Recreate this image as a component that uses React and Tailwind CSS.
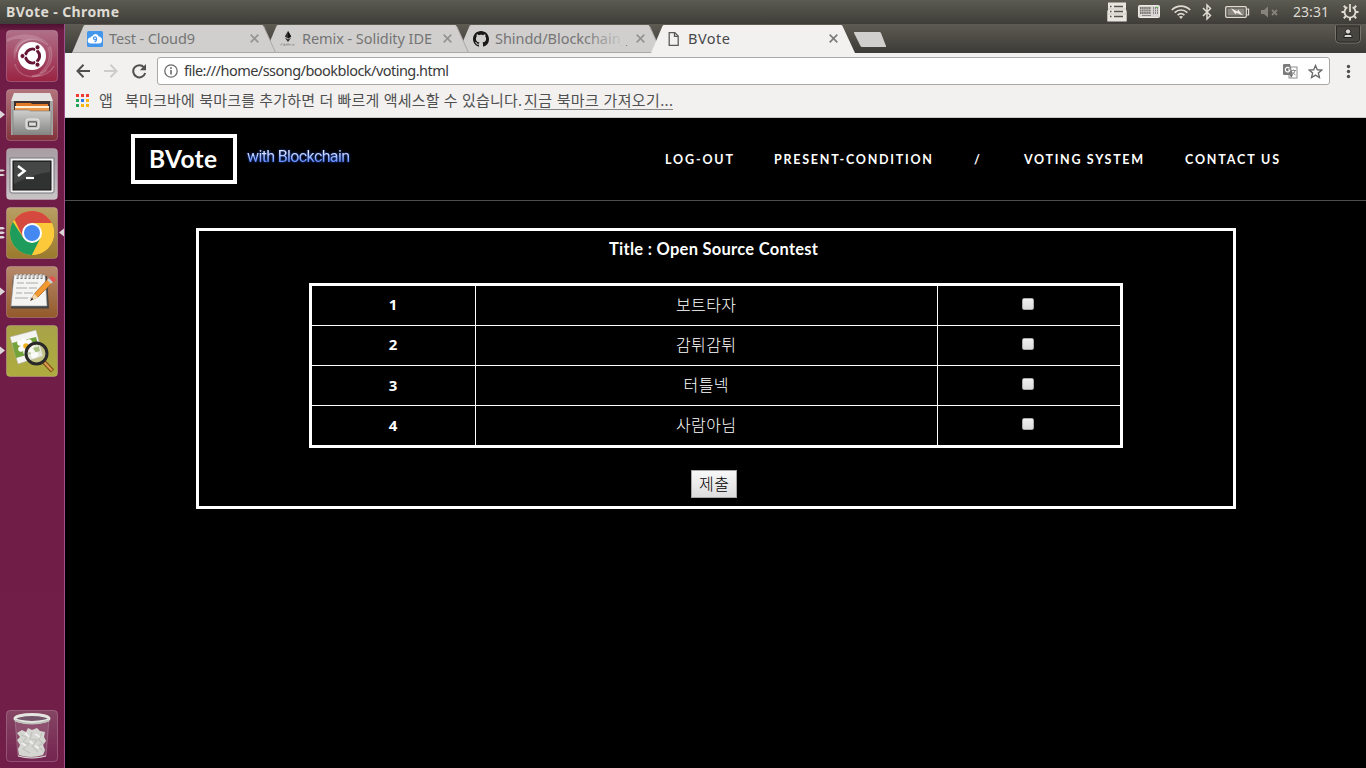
import { useLayoutEffect, useRef, useState } from "react";

/* Spreads its text evenly over the width of its own box. */
function Fit({ className = "", children }) {
  const box = useRef(null);
  const inner = useRef(null);
  const [spacing, setSpacing] = useState(0);
  useLayoutEffect(() => {
    const count = Array.from(children).length;
    if (count < 2) return;
    const extra = box.current.clientWidth - inner.current.getBoundingClientRect().width;
    setSpacing(extra / (count - 1));
  }, [children]);
  return (
    <span ref={box} className={`block shrink-0 whitespace-nowrap ${className}`}>
      <span ref={inner} className="inline-block" style={{ letterSpacing: `${spacing}px` }}>
        {children}
      </span>
    </span>
  );
}

const ui = "font-['Noto_Sans','Noto_Sans_CJK_KR',sans-serif]";

function StatusIcons() {
  return (
    <div className="flex h-6 items-center">
      <svg width="20" height="24" viewBox="0 0 20 24">
        <path d="M1 2.500h18v7l.7 2v10H.3v-10l.7-2z" fill="#e8e6df" />
        <path d="M3 6.500h1.500M7 6.500h9M3 11.500h1.500M7 11.500h9M3 16.500h1.500M7 16.500h9" stroke="#55534d" strokeWidth="1.300" />
        <path d="M1 9h18M0 14h20" stroke="#c4c2bb" strokeWidth=".7" />
      </svg>
      <svg className="ml-[11px]" width="22" height="24" viewBox="0 0 22 24">
        <rect x=".5" y="5.500" width="21" height="12" rx="1" fill="#d8d5d2" stroke="#eeeae4" />
        <path d="M2 8h11M2 10.500h11M2 13h11" stroke="#77756f" strokeWidth="1.800" strokeDasharray="1.500 .6" />
        <path d="M15 8h5M15 10.500h5M15 13h5" stroke="#888" strokeWidth="1.800" strokeDasharray="1 1" />
        <path d="M4 15.500h9" stroke="#888" />
        <path d="M18 7.500h2" stroke="#54b848" />
      </svg>
      <svg className="ml-[11px]" width="20" height="24" viewBox="0 0 20 24" fill="none" stroke="#dfdbd2" strokeWidth="1.700">
        <path d="M.8 10C6 4.800 14 4.800 19.200 10" />
        <path d="M3.700 12.600c3.600-3.500 9-3.500 12.600 0" />
        <path d="M6.600 15.200c2-1.900 4.800-1.900 6.800 0" />
        <path d="M8 16.800q2-1.400 4 0L10 19z" fill="#dfdbd2" stroke="none" />
      </svg>
      <svg className="ml-[11px]" width="10" height="24" viewBox="0 0 10 24" fill="none" stroke="#dfdbd2" strokeWidth="1.500">
        <path d="M1 8l7.500 7.500L5 19V5l3.500 3.500L1 16" />
      </svg>
      <svg className="ml-[13px]" width="25" height="24" viewBox="0 0 25 24">
        <rect x=".7" y="6.700" width="20.600" height="10.600" rx="1" fill="none" stroke="#dfdbd2" strokeWidth="1.300" />
        <rect x="2.500" y="8.500" width="17" height="7" fill="#8a8881" />
        <path d="M22.200 9.200h1.400v5.600h-1.400" fill="none" stroke="#dfdbd2" strokeWidth="1.200" />
        <path d="M6 8.200l6.500 3.200.6-1.800 4.800 6-6.600-2.900-.6 1.700z" fill="#f0ece4" />
      </svg>
      <svg className="ml-[11px]" width="17" height="24" viewBox="0 0 17 24">
        <path d="M0 10h3l4-3.500v11L3 14H0z" fill="#85837b" />
        <path d="M11 10l5 5m0-5l-5 5" stroke="#85837b" strokeWidth="1.800" />
      </svg>
      <Fit className={`ml-[15px] w-[36px] text-[14px] leading-6 text-[#dfdbd2] ${ui}`}>23:31</Fit>
      <svg className="ml-[12px] mr-[7px]" width="18" height="24" viewBox="-9 -12 18 24" fill="none" stroke="#dfdbd2">
        <path d="M-2.600-4.800A5.500 5.500 0 1 0 2.600-4.800" strokeWidth="1.800" />
        <path d="M0-8v8" strokeWidth="1.800" />
        <path d="M5.500 0h3M-5.500 0h-3M0 5.500v3M4 4l2.200 2.200M-4 4l-2.200 2.200M4-4l2.200-2.200M-4-4l-2.200-2.200" strokeWidth="2" />
      </svg>
    </div>
  );
}

function Tile({ from, to, children }) {
  const id = `tile${from.slice(1)}`;
  return (
    <svg className="block" width="52" height="52" viewBox="0 0 52 52">
      <defs>
        <linearGradient id={id} x2="0" y2="1">
          <stop stopColor={from} />
          <stop offset="1" stopColor={to} />
        </linearGradient>
      </defs>
      <rect x=".5" y=".5" width="51" height="51" rx="3.500" fill={`url(#${id})`} stroke="#fff" strokeOpacity=".22" />
      {children}
    </svg>
  );
}

function DashTile() {
  return (
    <Tile from="#b07088" to="#9a2343">
      <path d="M1 9C14 2 34 2 44 16q-8-9-20-6Q10 14 9 30 4 18 16 9 8 8 1 12z" fill="#fff" fillOpacity=".16" />
      <path d="M44 16c5 14-2 28-18 30 10 1 18-3 22-10" fill="none" stroke="#fff" strokeOpacity=".22" strokeWidth="1.500" />
      <path d="M10 22C12 10 28 4 42 15M9 34c2 12 20 18 32 6M42 17c4 10 0 20-8 26" fill="none" stroke="#fff" strokeOpacity=".2" strokeWidth="1.500" />
      <circle cx="26" cy="26" r="14" fill="#fff" />
      <g transform="translate(26.500 26)">
        <circle r="7" fill="none" stroke="#651433" strokeWidth="3.200" />
        <path d="M0 0L-12 0M0 0L6 10.400M0 0L6-10.400" stroke="#fff" strokeWidth="1.400" />
        <circle r="5.400" fill="#fff" />
        <g fill="#651433" stroke="#fff" strokeWidth=".9">
          <circle cx="-10" r="2.500" />
          <circle cx="5" cy="8.700" r="2.500" />
          <circle cx="5" cy="-8.700" r="2.500" />
        </g>
      </g>
    </Tile>
  );
}

function FilesTile() {
  return (
    <Tile from="#b3747c" to="#82333a">
      <defs>
        <linearGradient id="cab" x2="0" y2="1">
          <stop stopColor="#cfcfcd" />
          <stop offset="1" stopColor="#868684" />
        </linearGradient>
      </defs>
      <path d="M8 4h36l3 9v33H5V13z" fill="#a5a5a3" />
      <path d="M8 4h36l3 8H5z" fill="#e4e4e2" />
      <path d="M8 12h36v10H8z" fill="#3c3030" />
      <path d="M10 14h15l1 1h16v7H10z" fill="#e07a28" />
      <path d="M9 17h34v2H9z" fill="#fff1d8" />
      <path d="M9 19h34v3H9z" fill="#f0994b" />
      <path d="M7 21h16l1.500 1H45v23.500H7z" fill="url(#cab)" stroke="#777" strokeWidth=".6" />
      <rect x="20" y="30" width="13" height="10" rx="2" fill="#c9c9c7" stroke="#eee" />
      <rect x="22.500" y="32.800" width="8" height="4.500" rx=".8" fill="#ddd" stroke="#555" strokeWidth="1.200" />
    </Tile>
  );
}

function TerminalTile() {
  return (
    <Tile from="#a79da2" to="#c8c4c6">
      <path d="M4 10h44v33q0 2-2 2H6q-2 0-2-2z" fill="#efefef" stroke="#77747a" />
      <rect x="7" y="13" width="38" height="29" fill="#303231" stroke="#141414" />
      <path d="M8 14h36v10Q26 26 8 36z" fill="#fff" fillOpacity=".1" />
      <path d="M12 18l6.500 5-6.500 5" fill="none" stroke="#fff" strokeWidth="2.500" />
      <path d="M20 30h8" stroke="#fff" strokeWidth="2.200" />
    </Tile>
  );
}

function ChromeTile() {
  return (
    <Tile from="#b99f65" to="#9a7a2b">
      <g transform="translate(26 26)">
        <circle r="22" fill="#fcc934" />
        <path d="M-19.050-11A22 22 0 0 0 0 22L8.600 5-8.600 5z" fill="#1e9c5b" />
        <path d="M8.600 5L0 22A22 22 0 0 0 19.700-10H0z" fill="#fcc93a" />
        <path d="M-17.500-13.300A22 22 0 0 1 19.700-10H0L-8.600 5z" fill="#d5493f" />
        <circle r="10" fill="#fff" />
        <circle r="8" fill="#4688f1" />
      </g>
    </Tile>
  );
}

function EditorTile() {
  return (
    <Tile from="#b78a6c" to="#935a2a">
      <path d="M7 10h34l2 32.500H5z" fill="#444" />
      <path d="M8 9h31l2 31H5z" fill="#f4f4f2" stroke="#999" strokeWidth=".6" />
      <path d="M11 17h7m2 0h12M10 22h11m2 0h8M10 27h6m2 0h9M9 32h13m2 0h3" stroke="#aaa" strokeWidth="1" />
      <path d="M11.500 8v5m4-5v5m4-5v5m4-5v5m4-5v5m4-5v5m4-5v5" stroke="#777" strokeWidth="2" />
      <path d="M11 8v4m4-4v4m4-4v4m4-4v4m4-4v4m4-4v4m4-4v4" stroke="#fff" strokeWidth="1" />
      <path d="M25 34l4-7L42 13l4 4-14 14z" fill="#f29a31" stroke="#a35b18" strokeWidth=".7" />
      <path d="M24 35l4.500-7 3.500 3.500z" fill="#f3d8ab" />
      <path d="M24 35l2-3.200 1.400 1.400z" fill="#222" />
      <path d="M41 14l4 4 2-2-4-4z" fill="#ccc" />
      <path d="M43 12q2-3 5-1t.500 5L47 16z" fill="#e05550" />
    </Tile>
  );
}

function ViewerTile() {
  return (
    <Tile from="#a8a348" to="#aeac3f">
      <path d="M4 12l26-7 7 26-25 8z" fill="#f4f4f0" stroke="#aaa" strokeWidth=".5" />
      <path d="M6 18l24-6 4 14-24 7z" fill="#74a23b" />
      <g fill="#fff">
        <circle cx="14" cy="18" r="2.800" />
        <circle cx="18" cy="16" r="2.800" />
        <circle cx="23" cy="17" r="2.800" />
        <circle cx="26" cy="20" r="2.800" />
        <circle cx="25" cy="25" r="2.800" />
        <circle cx="20" cy="27" r="2.800" />
        <circle cx="15" cy="24" r="2.800" />
        <circle cx="20" cy="21" r="5.500" />
      </g>
      <circle cx="20" cy="21" r="2.800" fill="#efb21e" />
      <path d="M38 37l8.500 9" stroke="#7d5018" strokeWidth="4.500" />
      <path d="M38 37l8 8.500" stroke="#d89b4e" strokeWidth="2.200" />
      <circle cx="30.500" cy="28.500" r="10.500" fill="#d8dcc4" fillOpacity=".5" stroke="#292929" strokeWidth="3" />
      <path d="M24.500 25q3-3 5 2 3 0 3 3-2 4-7 3z" fill="#fff" fillOpacity=".8" />
      <path d="M24 27a7 7 0 0 1 8-6" fill="none" stroke="#fff" strokeOpacity=".7" strokeWidth="2" />
    </Tile>
  );
}

function TrashTile() {
  return (
    <Tile from="#864563" to="#742450">
      <path d="M9 9h34l-3 37q-14 4-28 0z" fill="#bda3b2" fillOpacity=".22" stroke="#b99fb0" strokeWidth=".7" strokeOpacity=".6" />
      <path d="M13 45l-1-6 2-4-3-5 3-3-3-4 5-3 4 2 2-4 4 2 5-2 3 3 5 1-1 5 2 4-3 4 2 5-2 5q-12 4-24 0z" fill="#d5d6d1" />
      <path d="M15 25l6 2-4 5 6 2-6 5 7 4M26 22l-2 7 7 1-5 6 6 6M36 23l-3 7 4 3-5 3 5 5" fill="none" stroke="#c0c2bc" strokeWidth="1.200" />
      <path d="M19 23l4 4M29 24l5 3M16 33l4 3M29 36l4 2M24 31l3 3" stroke="#eee" strokeWidth="2" />
      <path d="M12 46q14 4 28 0" fill="none" stroke="#d9dad5" />
      <ellipse cx="26" cy="8.500" rx="17" ry="4" fill="#74566a" stroke="#e4e5e0" strokeWidth="3" />
      <path d="M9 9.500q17 7 34 0v2q-17 6-34 0z" fill="#bfc1bb" />
    </Tile>
  );
}

function LauncherItem({ windows = 0, active, children }) {
  return (
    <div className="flex h-[52px] w-[64px] items-center">
      <svg width="6" height="52" viewBox="0 0 6 52" fill="#dcd6d8">
        {windows === 1 && <path d="M0 21.500l5 4-5 4z" />}
        {windows === 2 && <path d="M0 21.500h3l2 1-2 1H0zM0 26h3l2 1-2 1H0z" />}
        {windows === 3 && <path d="M0 20h3l2 1.200-2 1.200H0zM0 24.500h3l2 1.200-2 1.200H0zM0 29h3l2 1.200-2 1.200H0z" />}
      </svg>
      {children}
      <svg width="6" height="52" viewBox="0 0 6 52" fill="#dcd6d8">
        {active && <path d="M6 21.500l-5 4 5 4z" />}
      </svg>
    </div>
  );
}

function Launcher() {
  return (
    <aside className="flex w-[65px] shrink-0 flex-col justify-between border-r border-[#a0508c] bg-linear-to-b from-[#4d1030] from-0% via-[#6f1d46] via-[1%] to-[#711f49] pb-[6px] pt-[6px]">
      <div className="flex flex-col gap-[7px]">
        <LauncherItem><DashTile /></LauncherItem>
        <LauncherItem windows={1}><FilesTile /></LauncherItem>
        <LauncherItem windows={2}><TerminalTile /></LauncherItem>
        <LauncherItem windows={3} active><ChromeTile /></LauncherItem>
        <LauncherItem windows={1}><EditorTile /></LauncherItem>
        <LauncherItem windows={1}><ViewerTile /></LauncherItem>
      </div>
      <LauncherItem><TrashTile /></LauncherItem>
    </aside>
  );
}

function Tab({ icon, title, active, fades, layer, width }) {
  return (
    <div className={`relative -mr-[12px] h-[29px] w-[205px] shrink-0 ${layer}`}>
      <svg className="absolute inset-0" width="205" height="29" viewBox="0 0 205 29">
        <path d="M0 29L11.500 2Q12 1 13 1h177q1 0 1.500 1L204 29z" fill={active ? "#f2f1f0" : "#d0cfce"} />
        {!active && <path d="M0 28.500h203.500L191.500 2" fill="none" stroke="#aaa9a7" />}
      </svg>
      <div className="relative flex h-[29px] items-center pl-[15px]">
        {icon}
        <div className="ml-[6px] w-[132px]">
          <Fit className={`text-[14.500px] leading-[26px] mb-[2px] ${width} ${ui} ${active ? "text-[#48484a]" : "text-[#757575]"}`}>{title}</Fit>
        </div>
        <svg className="ml-[9px]" width="9" height="9" viewBox="0 0 9 9" stroke={active ? "#7d7d7d" : "#949494"} strokeWidth="1.700">
          <path d="M.7.700l7.600 7.600m0-7.600L.7 8.300" />
        </svg>
        {fades && <div className="absolute left-[126px] top-1 h-5 w-[42px] bg-linear-to-r from-transparent to-[#d0cfce]" />}
      </div>
    </div>
  );
}

const cloud9 = (
  <svg className="shrink-0" width="16" height="16" viewBox="0 0 16 16">
    <rect width="16" height="16" rx="1.500" fill="#4297ed" />
    <path d="M4 12.500a3 3 0 0 1-.5-6Q4 5 5.500 5 6.500 3 8.500 3q2.500 0 3.300 2.500Q15 6 15 9q0 3.500-3 3.500z" fill="#fff" />
    <circle cx="8" cy="7.300" r="1.500" fill="none" stroke="#4297ed" strokeWidth="1.200" />
    <path d="M9.600 7.500q0 3-2.100 3.500" fill="none" stroke="#4297ed" strokeWidth="1.200" />
  </svg>
);

const remix = (
  <svg className="shrink-0" width="16" height="16" viewBox="0 0 16 16">
    <path d="M8 0l3.200 5.500L8 7.500 4.800 5.500z" fill="#333" />
    <path d="M8 0l3.200 5.500L8 7.500z" fill="#111" />
    <path d="M4.800 6.500L8 8.500l3.200-2L8 11z" fill="#222" />
    <path d="M1 14.500v-1.500h1.500m1 .7h2m-2-.7h1.500m-1.500 1.500h2m1 0v-1.500h2.800v1.500m-1.400-1.500v1.500m3-1.500v1.500m1.500-1.500l2 1.500m0-1.500l-2 1.500" fill="none" stroke="#8a8a8a" strokeWidth=".7" />
  </svg>
);

const github = (
  <svg className="shrink-0" width="16" height="16" viewBox="0 0 16 16" fill="#191717">
    <path d="M8 0C3.580 0 0 3.580 0 8c0 3.540 2.290 6.530 5.470 7.590.4.070.55-.17.55-.38 0-.19-.01-.82-.01-1.490-2.010.37-2.530-.49-2.690-.94-.09-.23-.48-.94-.82-1.130-.28-.15-.68-.52-.01-.53.63-.01 1.080.58 1.230.82.72 1.210 1.870.87 2.330.66.07-.52.28-.87.51-1.070-1.780-.2-3.640-.89-3.640-3.950 0-.87.31-1.590.82-2.150-.08-.2-.36-1.020.08-2.120 0 0 .67-.21 2.200.82.64-.18 1.320-.27 2-.27s1.360.09 2 .27c1.530-1.040 2.200-.82 2.200-.82.44 1.100.16 1.920.08 2.120.51.56.82 1.270.82 2.150 0 3.070-1.870 3.750-3.650 3.950.29.25.54.73.54 1.480 0 1.070-.01 1.930-.01 2.200 0 .21.15.46.55.38A8.010 8.010 0 0 0 16 8c0-4.420-3.580-8-8-8z" />
  </svg>
);

const page = (
  <svg className="shrink-0" width="16" height="16" viewBox="0 0 16 16" fill="none" stroke="#5a5a5a" strokeWidth="1.300">
    <path d="M3.200 1.600h5.600l3.400 3.500v9.200h-9z" />
    <path d="M8.500 1.700v3.700H12" />
  </svg>
);

function BrowserChrome() {
  return (
    <div className="shrink-0">
      <div className="flex h-[29px] items-start justify-between bg-linear-to-b from-[#5d5b52] to-[#3c3b37] pl-[7px]">
        <div className="flex">
          <Tab icon={cloud9} title="Test - Cloud9" width="w-[86px]" layer="z-30" />
          <Tab icon={remix} title="Remix - Solidity IDE" width="w-[130px]" layer="z-20" />
          <Tab icon={github} title="Shindd/Blockchain_" width="w-[132px]" layer="z-10" fades />
          <Tab icon={page} title="BVote" width="w-[42px]" layer="z-40" active />
          <svg className="ml-[10px] mt-[7px]" width="34" height="17" viewBox="0 0 34 17">
            <path d="M.5 1h25q1 0 1.500 1l5 13q.3 1-.7 1H8Q7 16 6.500 15L0 2Q-.3 1 .5 1z" fill="#d0cfce" />
          </svg>
        </div>
        <svg className="mr-[5px]" width="26" height="20" viewBox="0 0 26 20">
          <path d="M.5 2v13q0 4 4 4h17q4 0 4-4V2" fill="none" stroke="#77756c" />
          <path d="M1.500 2v13q0 3 3 3h17q3 0 3-3V2z" fill="#46453f" stroke="#2c2b28" />
          <path d="M9 13.500V12q0-1.500 2-1.500h4q2 0 2 1.500v1.500z" fill="#d8d6d2" stroke="#22211f" strokeWidth="1" />
          <circle cx="13" cy="7.500" r="2.700" fill="#d8d6d2" stroke="#22211f" strokeWidth="1" />
        </svg>
      </div>
      <div className="flex h-[35px] items-center bg-[#f2f1f0] pl-[11px] pr-[15px] pt-px">
        <svg width="71" height="16" viewBox="0 0 71 16" fill="none" strokeWidth="2">
          <path d="M14 8H1.500m6-6.200L1.500 8l6 6.200" stroke="#505050" />
          <path d="M28 8h12.500m-6-6.200L40.500 8l-6 6.200" stroke="#cdcccb" />
          <path d="M68 4.300A6.100 6.100 0 1 0 69.200 10" stroke="#505050" />
          <path d="M70 1v6.200h-6.200z" fill="#505050" />
        </svg>
        <div className="ml-[10px] flex h-[28px] flex-1 items-center rounded-[3px] border border-[#a9a8a7] bg-white pl-[6px] pr-[6px]">
          <svg width="14" height="14" viewBox="0 0 14 14" fill="none" stroke="#6b6b6b" strokeWidth="1.300">
            <circle cx="7" cy="7" r="6.200" />
            <path d="M7 6v4.500M7 3.300v1.600" strokeWidth="1.600" />
          </svg>
          <Fit className={`ml-[6px] mb-[2px] w-[265px] text-[14.500px] leading-[24px] text-[#3a3a3a] ${ui}`}>file:///home/ssong/bookblock/voting.html</Fit>
          <svg className="ml-auto" width="15" height="15" viewBox="0 0 15 15">
            <rect x="6" y="3" width="8" height="11" fill="#fff" stroke="#8d8d8d" />
            <path d="M1 0h6l3 11H1q-1 0-1-1V1q0-1 1-1z" fill="#7c7c7c" />
            <path d="M6.500 4.300A2.300 2.300 0 1 0 6.900 6H5" fill="none" stroke="#fff" strokeWidth="1.200" />
            <path d="M8.500 6.500H13M10.800 5.500v1M12 6.800Q11.500 9 9 11m.800-3Q10.500 10 12.500 11" fill="none" stroke="#8d8d8d" />
            <path d="M7 11h2.800L8 14z" fill="#666" />
          </svg>
          <svg className="ml-[10px]" width="15" height="15" viewBox="0 0 24 24" fill="none" stroke="#6b6b6b" strokeWidth="2.200">
            <path d="M12 2.500l2.900 6.700 7.100.6-5.400 4.700 1.700 7.100-6.300-3.800-6.300 3.800 1.700-7.100L2 9.800l7.100-.6z" />
          </svg>
        </div>
        <svg className="ml-[15px]" width="6" height="16" viewBox="0 0 6 16" fill="#505050">
          <circle cx="3.500" cy="3.500" r="1.700" />
          <circle cx="3.500" cy="8.500" r="1.700" />
          <circle cx="3.500" cy="13.500" r="1.700" />
        </svg>
      </div>
      <div className={`flex h-[30px] items-center border-b border-[#c9c8c7] bg-[#f2f1f0] pb-[4px] pl-[11px] text-[15px] leading-[25px] text-[#505050] ${ui}`}>
        <svg width="13" height="13" viewBox="0 0 13 13">
          <path d="M0 0h3v3H0zM5 0h3v3H5zM10 0h3v3h-3z" fill="#f23b30" />
          <path d="M0 5h3v3H0zM0 10h3v3H0z" fill="#26a15b" />
          <path d="M5 5h3v3H5z" fill="#2d7ff0" />
          <path d="M10 5h3v3h-3zM5 10h3v3H5zM10 10h3v3h-3z" fill="#f5b50a" />
        </svg>
        <Fit className="ml-[10px] w-[14px]">앱</Fit>
        <Fit className="ml-[12px] w-[397px]">북마크바에 북마크를 추가하면 더 빠르게 액세스할 수 있습니다.</Fit>
        <Fit className="ml-[2px] mb-px h-[20px] w-[149px] border-b border-[#858585] leading-[21px]">지금 북마크 가져오기...</Fit>
      </div>
    </div>
  );
}

const heading = "font-['Lato','Noto_Sans_CJK_KR',sans-serif]";

const candidates = [
  { id: 1, name: "보트타자", width: "w-[60px]" },
  { id: 2, name: "감튀감튀", width: "w-[60px]" },
  { id: 3, name: "터틀넥", width: "w-[45px]" },
  { id: 4, name: "사람아님", width: "w-[60px]" },
];

function VotingPage() {
  return (
    <main className={`flex-1 bg-black text-white ${heading}`}>
      <header className="flex h-[83px] items-start border-b border-[#4d4d4d] pl-[66px] pt-[16px]">
        <div className="flex h-[50px] w-[106px] border-4 border-white pl-[14px] text-[24.500px] font-bold leading-[41px]">
          <Fit className="w-[68px]">BVote</Fit>
        </div>
        <Fit className="ml-[10px] mt-[12px] w-[103px] bg-linear-to-b from-[#e0e8ff] from-30% to-[#4a78ff] to-80% bg-clip-text font-['Roboto',sans-serif] text-[16px] leading-[22px] text-transparent [filter:drop-shadow(0_0_1px_#2450e0)]">
          with Blockchain
        </Fit>
        <nav className="ml-[315px] flex pt-[15px] text-[12.500px] font-bold leading-[21px]">
          <Fit className="w-[68px]">LOG-OUT</Fit>
          <Fit className="ml-[41px] w-[158px]">PRESENT-CONDITION</Fit>
          <span className="ml-[42px] w-[7px]">/</span>
          <Fit className="ml-[43px] w-[119px]">VOTING SYSTEM</Fit>
          <Fit className="ml-[42px] w-[94px]">CONTACT US</Fit>
        </nav>
      </header>
      <section className="ml-[131px] mt-[27px] flex h-[281px] w-[1040px] flex-col items-center border-[3px] border-white">
        <Fit className="-ml-[5px] mt-[6px] h-[24px] w-[209px] text-[16.500px] font-bold leading-[25px]">Title : Open Source Contest</Fit>
        <div className="mt-[22px] h-[165px] w-[814px] divide-y divide-white border-[3px] border-white text-[16px]">
          {candidates.map((c) => (
            <div key={c.id} className="flex h-[40px] divide-x divide-white last:h-[39px]">
              <div className={`w-[164px] pr-px text-center font-['Open_Sans',sans-serif] text-[15px] font-bold leading-[26px] ${c.id > 2 ? "pt-[6px]" : "pt-[5px]"}`}>{c.id}</div>
              <div className="flex w-[462px] justify-center pr-px pt-[5px] font-['Noto_Sans_CJK_KR',sans-serif] font-light leading-[26px]">
                <Fit className={c.width}>{c.name}</Fit>
              </div>
              <div className="flex flex-1 justify-center pt-[12px]">
                <input
                  type="checkbox"
                  className="mr-[3px] block size-3 appearance-none rounded-[2px] border border-[#a9a9a9] bg-linear-to-b from-[#f0f0f0] to-[#dcdcdc]"
                />
              </div>
            </div>
          ))}
        </div>
        <button className="-ml-[4px] mt-[22px] flex h-[28px] w-[46px] justify-center border border-[#a6a6a6] bg-linear-to-b from-[#f8f8f8] to-[#dddddd] font-['Noto_Sans_CJK_KR',sans-serif] text-[16px] font-light leading-[25px] text-black">
          <Fit className="w-[30px]">제출</Fit>
        </button>
      </section>
    </main>
  );
}

export default function App() {
  return (
    <div className="flex h-[768px] w-[1366px] flex-col overflow-hidden bg-black">
      <div className="flex h-6 shrink-0 items-center justify-between bg-linear-to-b from-[#5c5b51] to-[#3e3d39]">
        <Fit className={`ml-[6px] w-[113px] text-[14px] font-bold leading-6 text-[#dfdbd2] ${ui}`}>BVote - Chrome</Fit>
        <StatusIcons />
      </div>
      <div className="flex min-h-0 flex-1">
        <Launcher />
        <div className="flex min-w-0 flex-1 flex-col">
          <BrowserChrome />
          <VotingPage />
        </div>
      </div>
    </div>
  );
}
